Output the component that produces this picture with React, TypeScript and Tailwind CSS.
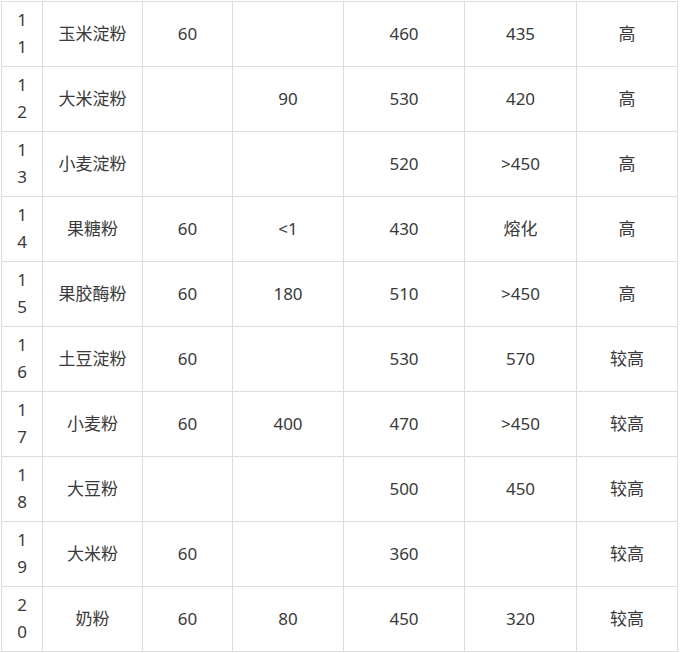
const rows: string[][] = [
  ['11', '玉米淀粉', '60', '', '460', '435', '高'],
  ['12', '大米淀粉', '', '90', '530', '420', '高'],
  ['13', '小麦淀粉', '', '', '520', '>450', '高'],
  ['14', '果糖粉', '60', '<1', '430', '熔化', '高'],
  ['15', '果胶酶粉', '60', '180', '510', '>450', '高'],
  ['16', '土豆淀粉', '60', '', '530', '570', '较高'],
  ['17', '小麦粉', '60', '400', '470', '>450', '较高'],
  ['18', '大豆粉', '', '', '500', '450', '较高'],
  ['19', '大米粉', '60', '', '360', '', '较高'],
  ['20', '奶粉', '60', '80', '450', '320', '较高'],
];

const widths = ['w-[41px]', 'w-[100px]', 'w-[90px]', 'w-[111px]', 'w-[121px]', 'w-[112px]', 'w-[101px]'];

export default function App() {
  return (
    <div className="min-h-[653px] bg-white pl-px pt-px">
      <table
        className="table-fixed border-collapse text-[17px] leading-[27px] text-[#3a3a3a]"
        style={{ fontFamily: '"Noto Sans", "Noto Sans CJK SC", sans-serif' }}
      >
        <colgroup>
          {widths.map((w, i) => (
            <col key={i} className={w} />
          ))}
        </colgroup>
        <tbody>
          {rows.map((row, r) => (
            <tr key={r} className="h-[65px]">
              {row.map((cell, c) => (
                <td
                  key={c}
                  className={
                    c === 0
                      ? 'border border-[#dddddd] px-3 pb-[2px] text-center align-middle break-all'
                      : 'border border-[#dddddd] px-1 pb-[2px] text-center align-middle'
                  }
                >
                  {cell}
                </td>
              ))}
            </tr>
          ))}
        </tbody>
      </table>
    </div>
  );
}
